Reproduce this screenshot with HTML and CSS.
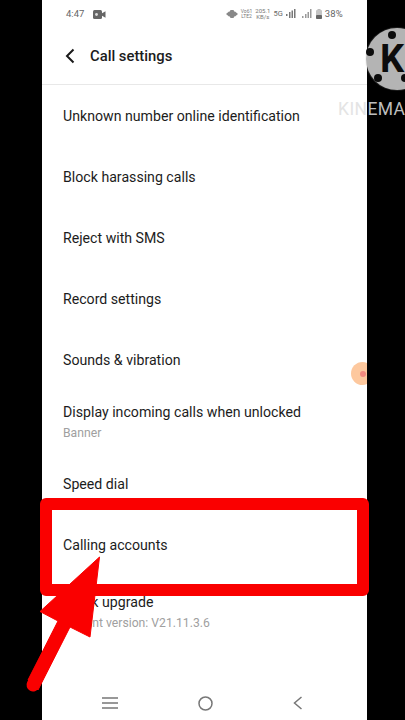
FILE: index.html
```html
<!DOCTYPE html>
<html lang="en">
<head>
    <meta charset="UTF-8">
    <meta name="viewport" content="width=device-width, initial-scale=1.0">
    <title>Call settings</title>
    <link rel="stylesheet" href="styles.css">
</head>
<body>
    <div class="screen">
        <div class="phone">
            <!-- Status bar -->
            <div class="status">
                <span class="time">4:47</span>
                <svg class="cam" width="13" height="9" viewBox="0 0 13 9"><rect x="0" y="0" width="9" height="9" rx="1.5" fill="#666"/><path d="M9 3.2 12.5 1.2V7.8L9 5.8Z" fill="#666"/><circle cx="3.5" cy="4.5" r="1.4" fill="#ddd"/></svg>
                <div class="status-right">
                    <svg width="12" height="8" viewBox="0 0 12 8"><path d="M0 4 3 1.5H9L12 4 9 6.5H3Z" fill="#888"/><rect x="4" y="0" width="4" height="8" rx="1" fill="#888"/></svg>
                    <span class="tiny">Vo61<br>LTE2</span>
                    <span class="tiny tiny-speed">205.1<br>KB/s</span>
                    <span class="net">5G</span>
                    <svg width="10" height="9" viewBox="0 0 10 9"><path d="M0 5h1.500v2H0zM3 3h1.500v6H3zM5.500 1.500H7V9H5.500zM8 0h1.500v9H8z" fill="#777"/></svg>
                    <svg class="sig2" width="10" height="9" viewBox="0 0 10 9"><path d="M0 7h1.500v2H0zM3 5h1.500v4H3zM5.500 3H7v6H5.500zM8 0h1.500v9H8z" fill="#999"/></svg>
                    <svg class="batt" width="6" height="10" viewBox="0 0 6 10"><rect x="1.500" y="0" width="3" height="1" fill="#bbb"/><rect x="0" y="1" width="6" height="9" rx="1" fill="#c4c4c4"/><rect x="0" y="6" width="6" height="4" rx="1" fill="#666"/></svg>
                    <span class="pct">38%</span>
                </div>
            </div>

            <!-- Header -->
            <div class="header">
                <svg class="back" width="10" height="16" viewBox="0 0 10 16"><path d="M8.500 1.500 2 8l6.500 6.500" fill="none" stroke="#1a1a1a" stroke-width="2"/></svg>
                <h1>Call settings</h1>
            </div>

            <!-- Settings list -->
            <ul class="list">
                <li class="row">Unknown number online identification</li>
                <li class="row">Block harassing calls</li>
                <li class="row">Reject with SMS</li>
                <li class="row">Record settings</li>
                <li class="row">Sounds &amp; vibration</li>
                <li class="row row-double">Display incoming calls when unlocked<small>Banner</small></li>
                <li class="row row-speed">Speed dial</li>
                <li class="row">Calling accounts</li>
                <li class="row row-double row-upgrade">Quick upgrade<small>Current version: V21.11.3.6</small></li>
            </ul>

            <!-- Navigation bar -->
            <div class="navbar">
                <svg width="16" height="12" viewBox="0 0 16 12"><path d="M0 1h16M0 6h16M0 11h16" stroke="#777" stroke-width="1.500"/></svg>
                <svg width="15" height="15" viewBox="0 0 15 15"><circle cx="7.500" cy="7.500" r="6.500" fill="none" stroke="#777" stroke-width="1.500"/></svg>
                <svg width="10" height="14" viewBox="0 0 10 14"><path d="M8.500 1 1.500 7l7 6" fill="none" stroke="#777" stroke-width="1.500"/></svg>
            </div>

            <div class="bubble"><span></span></div>
        </div>

        <!-- Watermark -->
        <div class="logo">
            <span class="dot dot-a"></span>
            <span class="dot dot-b"></span>
            <span class="dot dot-c"></span>
            <span class="dot dot-d"></span>
            <span class="logo-k">K</span>
        </div>
        <div class="wordmark"><span>KIN</span>EMA</div>

        <!-- Red annotation -->
        <div class="frame"></div>
        <svg class="arrow" width="405" height="720" viewBox="0 0 405 720">
            <path d="M99.500 557 40 611.500 58 621 28 680 38 690 70 627 90 637Z" fill="#fa0000" stroke="#fa0000" stroke-width="1" stroke-linejoin="round"/>
            <path d="M64 624 33 685" stroke="#fa0000" stroke-width="13" stroke-linecap="round"/>
        </svg>
    </div>
</body>
</html>
```

FILE: styles.css
```css
* {
    box-sizing: border-box;
}

body {
    margin: 0;
    background-color: #000;
    font-family: Roboto, 'Liberation Sans', sans-serif;
    color: #1c1c1c;
}

.screen {
    position: relative;
    width: 405px;
    height: 720px;
    overflow: hidden;
    background-color: #000;
}

.phone {
    position: relative;
    display: flex;
    flex-direction: column;
    width: 325px;
    height: 720px;
    margin-left: 42px;
    overflow: hidden;
    background-color: #fff;
}

/* Status bar */
.status {
    display: flex;
    align-items: center;
    height: 26px;
    padding: 1px 24px 0 24px;
    color: #666;
}

.time {
    font-size: 9.500px;
}

.cam {
    margin-left: 9px;
    margin-top: 1px;
}

.status-right {
    display: flex;
    align-items: center;
    margin-left: auto;
    gap: 3px;
}

.tiny {
    font-size: 5px;
    line-height: 5px;
    text-align: center;
    color: #777;
}

.tiny-speed {
    font-size: 6px;
    line-height: 6px;
}

.net {
    font-size: 7.500px;
}

.sig2 {
    margin-left: 3px;
}

.batt {
    margin-left: 1px;
}

.pct {
    font-size: 9.500px;
    letter-spacing: 0.2px;
}

/* Header */
.header {
    display: flex;
    align-items: center;
    height: 59px;
    padding: 1px 0 0 23px;
    border-bottom: 1px solid #e8e8e8;
}

.header h1 {
    margin: 0 0 0 15px;
    font-size: 14.800px;
    font-weight: 500;
}

/* Rows */
.list {
    list-style: none;
    margin: 0;
    padding: 0;
    flex: 1;
}

.row {
    display: flex;
    flex-direction: column;
    justify-content: center;
    height: 61px;
    padding-left: 21px;
    font-size: 14.150px;
}

.row small {
    margin-top: 6px;
    font-size: 12.200px;
    color: #a0a0a0;
}

.row-double {
    height: 64px;
}

.row-speed {
    height: 60px;
}

.row-upgrade {
    height: 62px;
    padding-top: 12px;
}

/* Navigation bar */
.navbar {
    display: flex;
    align-items: center;
    justify-content: space-between;
    height: 34px;
    padding: 0 64px 0 60px;
}

.bubble {
    position: absolute;
    left: 309px;
    top: 362px;
    display: flex;
    align-items: center;
    justify-content: center;
    width: 23px;
    height: 23px;
    border-radius: 50%;
    background-color: #fdc89e;
}

.bubble span {
    width: 6px;
    height: 6px;
    border-radius: 50%;
    background-color: #f48a80;
}

/* Watermark */
.logo {
    position: absolute;
    left: 366px;
    top: 28px;
    display: flex;
    align-items: center;
    width: 62px;
    height: 62px;
    border-radius: 50%;
    background-color: #b4b4b4;
    box-shadow: 0 0 0 1px rgba(180, 180, 180, 0.15);
}

.logo-k {
    margin-left: 14px;
    font-size: 38px;
    font-weight: 700;
    line-height: 1;
    color: #0c0c0c;
}

.dot {
    position: absolute;
    width: 8px;
    height: 8px;
    border-radius: 50%;
    background-color: #0c0c0c;
}

.dot-a { left: 22px; top: 3px; }
.dot-b { left: 0; top: 20px; }
.dot-c { left: 8px; top: 46px; }
.dot-d { left: 35px; top: 46px; }

.wordmark {
    position: absolute;
    left: 338px;
    top: 100px;
    font-size: 17.500px;
    line-height: 18px;
    letter-spacing: 0.4px;
    color: #bdbdbd;
}

.wordmark span {
    color: #e4e4e4;
}

/* Red annotation */
.frame {
    position: absolute;
    left: 40px;
    top: 498px;
    width: 329px;
    height: 98px;
    border: 12px solid #fa0000;
    border-radius: 6px;
}

.arrow {
    position: absolute;
    left: 0;
    top: 0;
}
```
